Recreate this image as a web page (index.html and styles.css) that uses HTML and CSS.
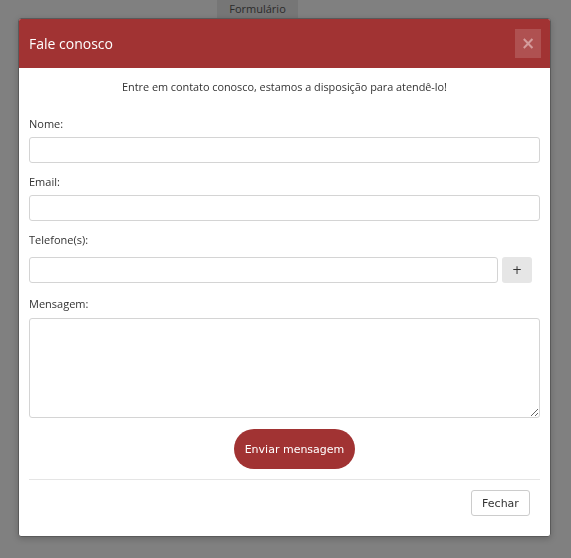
FILE: index.html
```html
<!DOCTYPE html>
<html lang="pt-BR">
<head>
<meta charset="utf-8">
<title>Fale conosco</title>
<link rel="stylesheet" href="styles.css">
</head>
<body>
<nav class="tabs"><span class="tab">Formulário</span></nav>
<div class="modal">
  <div class="modal-header">
    <h4 class="modal-title">Fale conosco</h4>
    <button class="close" type="button">×</button>
  </div>
  <form class="modal-body">
    <p class="intro">Entre em contato conosco, estamos a disposição para atendê-lo!</p>
    <div class="group">
      <label class="label">Nome:</label>
      <input class="field" type="text">
    </div>
    <div class="group">
      <label class="label">Email:</label>
      <input class="field" type="text">
    </div>
    <div class="group group-phone">
      <label class="label">Telefone(s):</label>
      <div class="phone-row">
        <input class="field" type="text">
        <button class="add" type="button">+</button>
      </div>
    </div>
    <div class="group">
      <label class="label">Mensagem:</label>
      <textarea class="field area"></textarea>
    </div>
    <div class="send-row">
      <button class="send" type="button">Enviar mensagem</button>
    </div>
  </form>
  <div class="modal-footer">
    <button class="close-btn" type="button">Fechar</button>
  </div>
</div>
</body>
</html>
```

FILE: styles.css
```css
html, body {
  margin: 0;
  padding: 0;
}
body {
  background: #808080;
  font-family: "Open Sans", "DejaVu Sans", sans-serif;
  font-size: 11px;
  color: #333;
  height: 558px;
  overflow: hidden;
}
.tabs {
  display: flex;
  padding-left: 217px;
}
.tab {
  display: block;
  width: 81px;
  height: 18px;
  line-height: 18px;
  text-align: center;
  background: #767676;
  color: #2b2b2b;
  font-size: 11px;
}
.modal {
  position: fixed;
  top: 18px;
  left: 18px;
  width: 531px;
  background: #fff;
  border: 1px solid #5a5a5a;
  border-radius: 3px;
  box-shadow: 0 2px 6px rgba(0,0,0,0.2);
  overflow: hidden;
}
.modal-header {
  height: 49px;
  background: #a13333;
  display: flex;
  align-items: center;
  justify-content: space-between;
  padding: 0 9px 0 10px;
  box-sizing: border-box;
}
.modal-title {
  margin: 0;
  font-size: 14px;
  font-weight: normal;
  color: #fff;
}
.close {
  width: 26px;
  height: 29px;
  border: 0;
  padding: 0;
  background: rgba(255,255,255,0.15);
  color: #d49c9c;
  font-family: "DejaVu Sans", sans-serif;
  font-size: 17px;
  font-weight: bold;
  line-height: 29px;
  margin-top: -1px;
}
.modal-body {
  padding: 11px 10px 0 10px;
  display: block;
  margin: 0;
}
.intro {
  margin: 0 0 21px;
  text-align: center;
  line-height: 16px;
  font-size: 10.9px;
  letter-spacing: -0.03px;
}
.group {
  margin-bottom: 11px;
}
.group-phone {
  margin-bottom: 13px;
}
.label {
  display: block;
  line-height: 16px;
  margin-bottom: 5px;
}
.field {
  display: block;
  width: 100%;
  height: 26px;
  box-sizing: border-box;
  border: 1px solid #d4d4d4;
  border-radius: 3px;
  background: #fff;
  margin: 0;
  padding: 2px 6px;
}
.phone-row {
  display: flex;
  gap: 4px;
  padding-top: 4px;
  padding-right: 8px;
}
.phone-row .field {
  flex: 1;
  width: auto;
}
.add {
  width: 30px;
  height: 26px;
  border: 0;
  border-radius: 3px;
  background: #e6e6e6;
  color: #333;
  font-family: "DejaVu Sans", sans-serif;
  font-size: 12px;
  padding: 0;
}
.field.area {
  height: 100px;
  margin-top: 6px;
  resize: vertical;
}
.send-row {
  display: flex;
  justify-content: center;
  padding-left: 20px;
}
.send {
  height: 40px;
  width: 121px;
  border: 0;
  border-radius: 20px;
  background: #a13333;
  color: #fff;
  font-family: "DejaVu Sans", sans-serif;
  font-size: 11px;
  padding: 0;
}
.modal-footer {
  margin: 10px 10px 0;
  border-top: 1px solid #e5e5e5;
  padding: 10px 10px 20px 0;
  display: flex;
  justify-content: flex-end;
}
.close-btn {
  width: 59px;
  height: 26px;
  background: #fff;
  border: 1px solid #ccc;
  border-radius: 3px;
  color: #333;
  font-family: "DejaVu Sans", sans-serif;
  font-size: 11px;
  padding: 0;
}
```
